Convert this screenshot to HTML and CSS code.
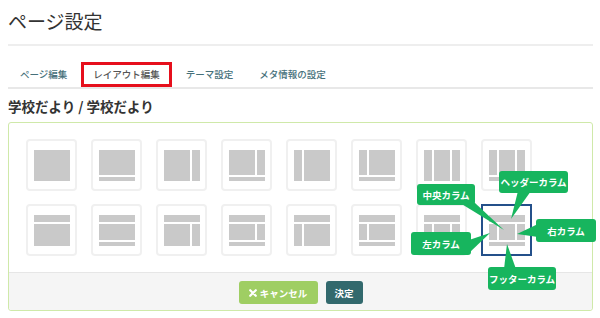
FILE: index.html
```html
<!DOCTYPE html>
<html lang="ja">

<head>
    <meta charset="UTF-8">
    <meta name="viewport" content="width=device-width, initial-scale=1.0">
    <title>ページ設定</title>
    <link rel="stylesheet" href="styles.css">
</head>

<body>
    <h1 class="page-title">ページ設定</h1>

    <ul class="tabs">
        <li><a href="#">ページ編集</a></li>
        <li class="active"><a href="#">レイアウト編集</a></li>
        <li><a href="#">テーマ設定</a></li>
        <li><a href="#">メタ情報の設定</a></li>
    </ul>

    <h2 class="section-title">学校だより / 学校だより</h2>

    <div class="panel">
        <div class="panel-body">
            <div class="layouts">
                <!-- row 1 -->
                <div class="tile"><div class="thumb"><div class="mid"><span class="main"></span></div></div></div>
                <div class="tile"><div class="thumb"><div class="mid"><span class="main"></span></div><span class="ft"></span></div></div>
                <div class="tile"><div class="thumb"><div class="mid"><span class="main"></span><span class="side"></span></div></div></div>
                <div class="tile"><div class="thumb"><div class="mid"><span class="main"></span><span class="side"></span></div><span class="ft"></span></div></div>
                <div class="tile"><div class="thumb"><div class="mid"><span class="side"></span><span class="main"></span></div></div></div>
                <div class="tile"><div class="thumb"><div class="mid"><span class="side"></span><span class="main"></span></div><span class="ft"></span></div></div>
                <div class="tile"><div class="thumb"><div class="mid"><span class="side"></span><span class="main"></span><span class="side"></span></div></div></div>
                <div class="tile"><div class="thumb"><div class="mid"><span class="side"></span><span class="main"></span><span class="side"></span></div><span class="ft"></span></div></div>
                <!-- row 2 -->
                <div class="tile"><div class="thumb"><span class="hd"></span><div class="mid"><span class="main"></span></div></div></div>
                <div class="tile"><div class="thumb"><span class="hd"></span><div class="mid"><span class="main"></span></div><span class="ft"></span></div></div>
                <div class="tile"><div class="thumb"><span class="hd"></span><div class="mid"><span class="main"></span><span class="side"></span></div></div></div>
                <div class="tile"><div class="thumb"><span class="hd"></span><div class="mid"><span class="main"></span><span class="side"></span></div><span class="ft"></span></div></div>
                <div class="tile"><div class="thumb"><span class="hd"></span><div class="mid"><span class="side"></span><span class="main"></span></div></div></div>
                <div class="tile"><div class="thumb"><span class="hd"></span><div class="mid"><span class="side"></span><span class="main"></span></div><span class="ft"></span></div></div>
                <div class="tile"><div class="thumb"><span class="hd"></span><div class="mid"><span class="side"></span><span class="main"></span><span class="side"></span></div></div></div>
                <div class="tile selected"><div class="thumb"><span class="hd"></span><div class="mid"><span class="side"></span><span class="main"></span><span class="side"></span></div><span class="ft"></span></div></div>
            </div>
        </div>

        <div class="panel-footer">
            <button class="btn btn-cancel">
                <svg width="8" height="8" viewBox="0 0 8 8"><path d="M1.2 1.2 L6.8 6.8 M6.8 1.2 L1.2 6.8" stroke="#fff" stroke-width="2.2" stroke-linecap="round"/></svg>
                キャンセル
            </button>
            <button class="btn btn-ok">決定</button>
        </div>

        <!-- callouts explaining the selected layout -->
        <svg class="tails" width="600" height="200" viewBox="0 0 600 200">
            <polygon points="451,80 466,80 495,107" />
            <polygon points="509,68 522,68 502,96" />
            <polygon points="529,101 529,114 508,111" />
            <polygon points="460,117 460,130 481,110" />
            <polygon points="495,146 507,146 498,121" />
        </svg>
        <div class="callout c-center">中央カラム</div>
        <div class="callout c-header">ヘッダーカラム</div>
        <div class="callout c-right">右カラム</div>
        <div class="callout c-left">左カラム</div>
        <div class="callout c-footer">フッターカラム</div>
    </div>
</body>

</html>
```

FILE: styles.css
```css
body {
    margin: 0;
    padding: 0 7px 0 8px;
    font-family: "Noto Sans CJK JP", "Noto Sans", sans-serif;
    color: #333;
    background-color: #fff;
}

.page-title {
    margin: 9px 0 0;
    padding-bottom: 12px;
    border-bottom: 2px solid #eee;
    font-size: 19px;
    font-weight: normal;
    line-height: 23px;
}

.tabs {
    display: flex;
    margin: 16px 0 0;
    padding: 0;
    list-style: none;
    border-bottom: 2px solid #e8e8e8;
}

.tabs li {
    margin-right: 2px;
}

.tabs a {
    display: block;
    padding: 0 12px;
    line-height: 25px;
    font-size: 9.5px;
    font-weight: 500;
    color: #46707a;
    text-decoration: none;
}

.tabs .active a {
    color: #555;
    box-shadow: inset 0 0 0 3px #e60f1c;
}

.section-title {
    margin: 7px 0 6px;
    font-size: 13.5px;
    line-height: 20px;
    font-weight: bold;
}

.panel {
    position: relative;
    border: 1px solid #cfe9a9;
    border-radius: 3px;
}

.panel-body {
    padding: 16px 17px;
}

.layouts {
    display: flex;
    flex-wrap: wrap;
    gap: 13px 14px;
    width: 506px;
}

.tile {
    box-sizing: border-box;
    width: 51px;
    height: 52px;
    display: flex;
    align-items: center;
    justify-content: center;
    border: 2px solid #f0f0f0;
    border-radius: 4px;
    background-color: #fff;
}

.tile.selected {
    border-color: #24508a;
    border-radius: 0;
}

.thumb {
    width: 36px;
    height: 31px;
    display: flex;
    flex-direction: column;
    gap: 2px;
}

.thumb span {
    background-color: #c9c9c9;
}

.thumb .hd {
    height: 7px;
}

.thumb .ft {
    height: 4px;
}

.thumb .mid {
    flex: 1;
    display: flex;
    gap: 2px;
}

.thumb .main {
    flex: 1;
}

.thumb .side {
    width: 8px;
}

.panel-footer {
    display: flex;
    justify-content: center;
    gap: 8px;
    padding: 8px 0 6px;
    border-top: 1px solid #e6e6e6;
    background-color: #f5f5f5;
    border-radius: 0 0 3px 3px;
}

.btn {
    display: flex;
    align-items: center;
    justify-content: center;
    gap: 3px;
    height: 23px;
    padding: 0 9px;
    border: none;
    border-radius: 3px;
    color: #fff;
    font-family: inherit;
    font-size: 9.5px;
    font-weight: bold;
    cursor: pointer;
}

.btn-cancel {
    width: 79px;
    background-color: #9fce63;
}

.btn-ok {
    width: 37px;
    background-color: #32696d;
}

.tails {
    position: absolute;
    left: 0;
    top: 0;
    overflow: visible;
    pointer-events: none;
}

.tails polygon {
    fill: #17b55e;
}

.callout {
    position: absolute;
    display: flex;
    align-items: center;
    justify-content: center;
    background-color: #17b55e;
    color: #fff;
    font-size: 9.5px;
    font-weight: bold;
    border-radius: 3px;
}

.c-center {
    left: 408px;
    top: 61px;
    width: 58px;
    height: 21px;
}

.c-header {
    left: 490px;
    top: 48px;
    width: 69px;
    height: 22px;
}

.c-right {
    left: 527px;
    top: 96px;
    width: 60px;
    height: 23px;
}

.c-left {
    left: 402px;
    top: 109px;
    width: 60px;
    height: 23px;
}

.c-footer {
    left: 479px;
    top: 144px;
    width: 68px;
    height: 23px;
}
```
